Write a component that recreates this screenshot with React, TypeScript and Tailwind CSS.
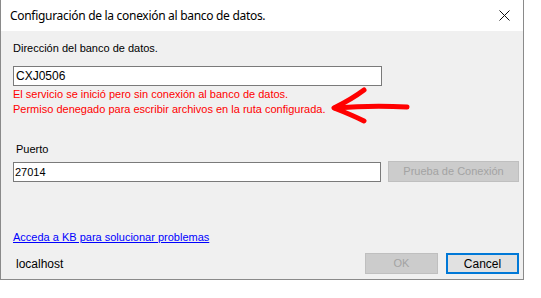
import React from "react";

export default function App() {
  const ui = { fontFamily: '"Liberation Sans", Arial, sans-serif' };
  const title = { fontFamily: '"Noto Sans", "Open Sans", sans-serif' };
  return (
    <div className="w-[541px] h-[298px] bg-white overflow-hidden">
      <div className="w-[524px] h-[280px] flex flex-col border-l border-r border-b border-[#8a8a8a] bg-[#f0f0f0]" style={ui}>
        <div className="h-[31px] bg-white flex items-center justify-between pl-[9px] pr-[9px] shrink-0">
          <span className="text-[12px] text-black tracking-[-0.3px]" style={title}>
            Configuración de la conexión al banco de datos.
          </span>
          <svg width="11" height="11" viewBox="0 0 11 11" className="mr-[4px]">
            <path d="M0.5 0.5 L10.5 10.5 M10.5 0.5 L0.5 10.5" stroke="#111" strokeWidth="1" fill="none" />
          </svg>
        </div>
        <div className="relative flex-1 flex flex-col pl-[12px] pt-[11px] text-[11px] text-black">
          <div className="leading-[13px] h-[13px]">Dirección del banco de datos.</div>
          <div className="mt-[11px] w-[369px] h-[20px] bg-white border border-[#7a7a7a] flex items-center pl-[2px] text-[12px] leading-none">
            CXJ0506
          </div>
          <div className="text-[11px] leading-[15px] text-[#ff0000] mt-[1px]">
            <div>El servicio se inició pero sin conexión al banco de datos.</div>
            <div>Permiso denegado para escribir archivos en la ruta configurada.</div>
          </div>
          <div className="mt-[26px] pl-[3px] leading-[13px] h-[13px]">Puerto</div>
          <div className="mt-[5px] flex items-start">
            <div className="mt-[1px] w-[368px] h-[20px] bg-white border border-[#7a7a7a] flex items-center pl-[1px] leading-none">
              27014
            </div>
            <div className="ml-[7px] w-[131px] h-[21px] bg-[#cccccc] border border-[#bfbfbf] flex items-center justify-center text-[#a3a3a3] leading-none">
              Prueba de Conexión
            </div>
          </div>
          <div className="mt-[49px] leading-[13px] h-[13px]">
            <span className="text-[#0000ff] underline">Acceda a KB para solucionar problemas</span>
          </div>
          <div className="mt-[9px] flex items-center">
            <div className="pl-[3px] flex-1 text-[12px]">localhost</div>
            <div className="w-[73px] h-[21px] bg-[#cccccc] border border-[#bfbfbf] flex items-center justify-center text-[#a3a3a3] leading-none">
              OK
            </div>
            <div className="ml-[8px] mr-[4px] w-[73px] h-[21px] bg-[#e1e1e1] border-2 border-[#0078d7] flex items-center justify-center leading-none text-[12px]">
              Cancel
            </div>
          </div>
          <svg className="absolute left-[326px] top-[54px]" width="90" height="40" viewBox="0 0 90 40">
            <path d="M37 5 Q25 14 7 23 Q25 30 37 36" stroke="#ff0000" strokeWidth="5" fill="none" strokeLinecap="round" strokeLinejoin="round" />
            <path d="M8 23 Q45 20 80 22" stroke="#ff0000" strokeWidth="5" fill="none" strokeLinecap="round" />
          </svg>
        </div>
      </div>
    </div>
  );
}
